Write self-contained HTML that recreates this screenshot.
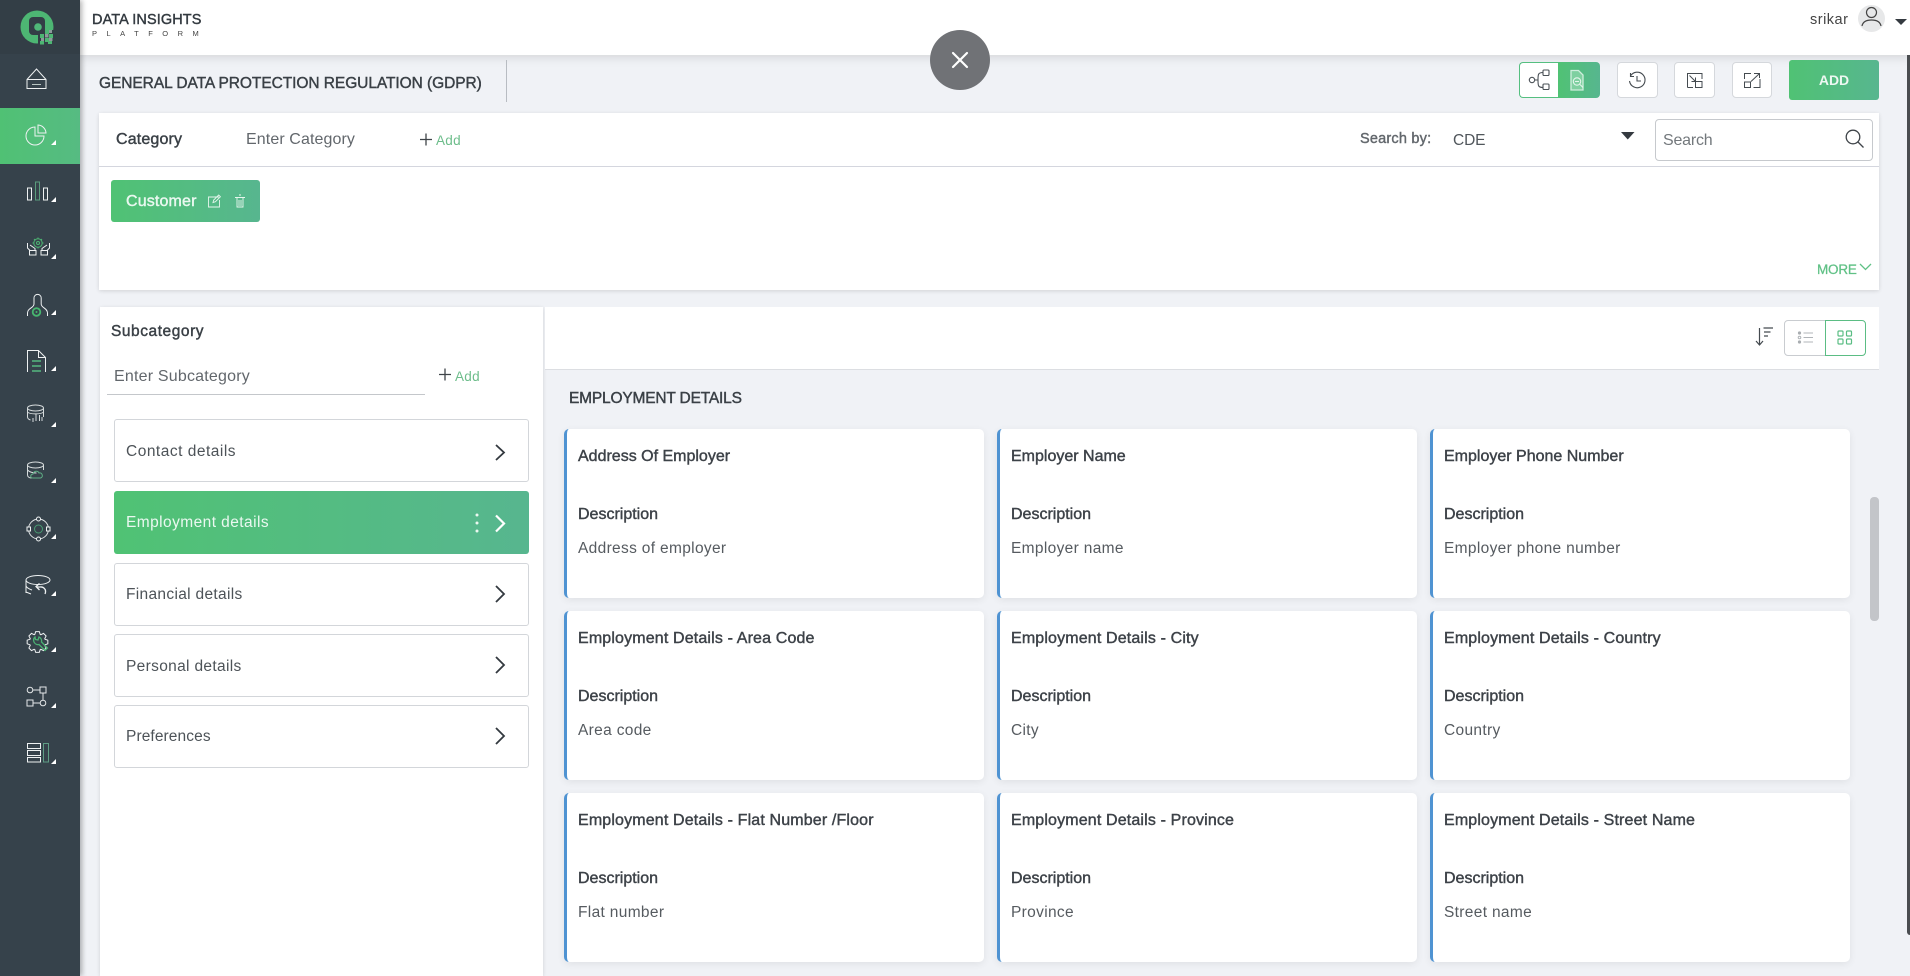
<!DOCTYPE html>
<html lang="en"><head><meta charset="utf-8"><title>Data Insights Platform</title>
<style>
*{box-sizing:border-box}
html,body{margin:0;padding:0;width:1910px;height:976px;overflow:hidden;background:#f0f2f6;font-family:"Liberation Sans",sans-serif;color:#3a4046}
div,span,svg{position:absolute}
.t{white-space:nowrap;line-height:20px;height:20px}
.s{-webkit-text-stroke:.42px currentColor}
.side{left:0;top:0;width:80px;height:976px;background:#36424b;box-shadow:2px 0 5px rgba(0,0,0,.3)}
.top{left:80px;top:0;width:1830px;height:55px;background:#fff;box-shadow:0 2px 10px rgba(0,0,0,.13)}
.panel{background:#fff;box-shadow:0 1px 4px rgba(0,0,0,.13)}
.btn{background:#fff;border:1px solid #d5d8dc;border-radius:4px;width:41px;height:36px;top:62px}
.item{left:114px;width:415px;height:63px;background:#fff;border:1px solid #d3d6da;border-radius:3px}
.card{width:420px;height:169px;background:#fff;border-left:3px solid #4f93d2;border-radius:5px;box-shadow:0 2px 8px rgba(0,0,0,.07)}
.card .a{left:11px;top:18px;font-size:16px;color:#3d4248}
.card .e{letter-spacing:.15px}
.card .b{left:11px;top:76px;font-size:16px;color:#3d4248}
.card .c{left:11px;top:110px;font-size:15.5px;letter-spacing:.33px;color:#565b60}
.grn{background:linear-gradient(90deg,#50c274,#57b68f)}
</style></head><body>

<div class="top"></div>
<div class="side"></div>

<svg style="left:0;top:0" width="80" height="976" viewBox="0 0 80 976" fill="none" stroke="#eef1f2" stroke-width="1">
  <defs><linearGradient id="ga"><stop offset="0" stop-color="#50c174"/><stop offset="1" stop-color="#56bb82"/></linearGradient></defs>
  <rect x="0" y="0" width="80" height="54" fill="#333e46" stroke="none"/>
  <rect x="0" y="108" width="80" height="56" fill="url(#ga)" stroke="none"/>
  <!-- logo -->
  <circle cx="37" cy="27" r="16.500" fill="#4db673" stroke="none"/>
  <rect x="29" y="17" width="16" height="18" rx="4" fill="#333e46" stroke="none"/>
  <rect x="38" y="30" width="17" height="16" fill="#333e46" stroke="none"/>
  <circle cx="38" cy="27" r="3.800" fill="#4fb878" stroke="none"/>
  <g stroke="none" fill="#4db673"><rect x="45" y="30" width="4" height="4"/><rect x="40" y="34" width="4" height="4"/><rect x="49" y="34" width="4" height="4"/><rect x="45" y="38" width="4" height="4"/><rect x="40" y="41" width="4" height="3.500"/><rect x="48" y="41" width="4" height="3"/></g>
  <g stroke="none" fill="#8d9a9b"><rect x="49" y="30" width="3" height="3"/><rect x="45" y="34" width="3.500" height="3.500"/><rect x="41" y="38" width="3" height="3"/><rect x="49" y="38" width="3.500" height="3"/></g>
  <!-- home -->
  <path d="M27 79.500 36.500 69 46 79.500V88.500H27ZM27 79.500H46"/><path d="M32 84.500H41" stroke="#b9c6c2"/>
  <!-- pie -->
  <path d="M35 127A9 9 0 1 0 44 136H35Z"/><path d="M38 125A8.500 8.500 0 0 1 46 133H38Z"/>
  <!-- bars -->
  <rect x="27.500" y="188" width="4" height="12"/><rect x="35.500" y="182" width="4" height="18" stroke="#5a9c7c"/><rect x="43.500" y="188" width="4" height="12"/>
  <!-- hands -->
  <circle cx="38" cy="243" r="4.200" stroke="#4db673"/><circle cx="38" cy="243" r="1.500" stroke="#4db673"/><path d="M38 237.500v1.300M38 247.200v1.300M32.500 243h1.300M42.200 243h1.300M34 239l1 1M42 239l-1 1" stroke="#4db673"/>
  <rect x="29.500" y="250.500" width="6.500" height="4.500"/><rect x="41" y="250.500" width="6.500" height="4.500"/>
  <path d="M27.500 243v5l2.500 2.500M30 245l5 3.500v2M49.500 243v5l-2.500 2.500M47 245l-5 3.500v2"/>
  <!-- person -->
  <path d="M27.500 316v-3c0-5 6.500-5 6.500-9v-6a3.600 3.600 0 0 1 7.200 0v6c0 4 6.300 4 6.300 9v3"/>
  <circle cx="36.500" cy="312" r="3.800" stroke="#47b56f" stroke-width="1.800"/><circle cx="36.500" cy="312" r="1" fill="#47b56f" stroke="none"/>
  <!-- doc -->
  <path d="M45.500 372V357.500L38.500 350.500H27.500V372"/><path d="M38.500 350.500V357.500H45.500"/><path d="M32 361H41M32 366H41M32 371H41" stroke="#55b87f" stroke-width="1.400"/>
  <!-- db -->
  <g stroke="#d6dbdc"><ellipse cx="35.500" cy="408" rx="8" ry="3"/><path d="M27.500 408v9c0 1.500 1.500 2.500 3 3M43.500 408v9M27.500 412c2 2.500 14 2.500 16 0"/><path d="M36 414v7M39.500 415v6M33 418v4M42 417v4"/></g>
  <!-- db cloud -->
  <g stroke="#d6dbdc"><ellipse cx="35.500" cy="465" rx="8" ry="3"/><path d="M27.500 465v10c0 2 2 3 4 3M43.500 465v5M27.500 470c2 2 6 3 9 3"/></g>
  <path d="M33 478c-3 0-3-3.500 0-4 1-3.500 5-3.500 6-1 3-1 5 4 1.500 5Z" stroke="#5fae85"/>
  <!-- circle -->
  <circle cx="38.500" cy="529" r="10" stroke="#dfe3e4"/><circle cx="38.500" cy="529" r="4" stroke="#4a9c73"/>
  <g fill="#36424b"><circle cx="38.500" cy="519" r="2"/><circle cx="38.500" cy="539" r="2"/><rect x="27" y="527" width="3.500" height="4"/><rect x="46.500" y="527" width="3.500" height="4"/></g>
  <!-- db arrow -->
  <ellipse cx="38" cy="580" rx="12" ry="4.500"/><path d="M26 580v13M26 586c1 2 3 3 6 4M26 592l5 2"/>
  <path d="M45 594c2-5-2-7.500-5-7H36M39.500 583.500l-3.500 3 3.500 3.500" stroke-width="1.300"/>
  <!-- gear -->
  <path transform="translate(37.500 642)" d="M7.520-2.740L10.340-1.820V1.820L7.520 2.740 7.250 3.380 8.600 6.020 6.020 8.600 3.380 7.250 2.740 7.520 1.820 10.340H-1.820L-2.740 7.520-3.380 7.250-6.020 8.600-8.600 6.020-7.250 3.380-7.520 2.740-10.340 1.820V-1.820L-7.520-2.740-7.250-3.380-8.600-6.020-6.020-8.600-3.380-7.250-2.740-7.520-1.820-10.340H1.820L2.740-7.520 3.380-7.250 6.020-8.600 8.600-6.020 7.250-3.380Z"/>
  <path d="M35 637a4.500 4.500 0 0 0-1 5c1 2 3 3 5 2.500l6 6 2.500-2.500-6-6c.5-2-.5-4-2.500-5l-1 3-2.500-.5Z" stroke="#4bb073" stroke-width="1.300"/>
  <!-- flow -->
  <g stroke="#e4e7e8"><circle cx="30" cy="690" r="2.800"/><rect x="40" y="687" width="6" height="6"/><path d="M33 690h7M43 693v7"/><circle cx="43" cy="703" r="2.800"/><rect x="27" y="700" width="6" height="6"/><path d="M33 703h7"/></g>
  <!-- list -->
  <rect x="27.500" y="743.500" width="13" height="5"/><rect x="27.500" y="750.500" width="13" height="5"/><rect x="27.500" y="757.500" width="13" height="4.500"/><rect x="43.500" y="743.500" width="5" height="18.500" stroke="#5f9c84"/>
  <!-- corner markers -->
  <g fill="#fff" stroke="none">
    <path d="M56 140v5h-5ZM56 197v5h-5ZM56 254v5h-5ZM56 310v5h-5ZM56 366v5h-5ZM56 422v5h-5ZM56 478v5h-5ZM56 534v5h-5ZM56 591v5h-5ZM56 647v5h-5ZM56 703v5h-5ZM56 759v5h-5Z"/>
  </g>
</svg>

<!-- header -->
<span class="t s" style="left:92px;top:10px;font-size:14.500px;letter-spacing:.1px;color:#333a40">DATA INSIGHTS</span>
<span class="t" style="left:92px;top:24px;font-size:7.500px;letter-spacing:9.500px;color:#444">PLATFORM</span>
<span class="t" style="left:1810px;top:10px;font-size:14.500px;letter-spacing:.5px;color:#444">srikar</span>
<div style="left:1858px;top:5px;width:27px;height:27px;border-radius:50%;background:#e7e8e9"></div>
<svg style="left:1858px;top:5px" width="27" height="27" fill="none" stroke="#444" stroke-width="1.200"><circle cx="13.500" cy="7.500" r="5"/><path d="M4 21c1-5 5-6 9.500-6s8.500 1 9.500 6"/></svg>
<svg style="left:1895px;top:19px" width="13" height="7"><path d="M0 0H12L6 6Z" fill="#343a40"/></svg>

<!-- page title bar -->
<span class="t s" style="left:99px;top:74px;font-size:15.500px;letter-spacing:-.06px;color:#3a4046">GENERAL DATA PROTECTION REGULATION (GDPR)</span>
<div style="left:506px;top:60px;width:1px;height:42px;background:#b8bcc2"></div>

<div style="left:1519px;top:62px;width:40px;height:36px;background:#fff;border:1px solid #55bf80;border-right:0;border-radius:4px 0 0 4px"></div>
<div class="grn" style="left:1558px;top:62px;width:42px;height:36px;border-radius:0 4px 4px 0"></div>
<svg style="left:1519px;top:62px" width="81" height="36" fill="none" stroke="#4a5056" stroke-width="1.100">
  <circle cx="13" cy="18" r="2.700"/><rect x="24" y="8" width="6" height="5.500" rx="1"/><rect x="24" y="22" width="6" height="5.500" rx="1"/><path d="M15.700 18H19M24 10.500c-5 0-5 2-5 7.500s0 7.500 5 7.500"/>
  <path d="M52 8.500h7.500l4.500 4.500V28H52Z" fill="#7fd0a0" stroke="#cfeedd" stroke-width="1.300"/><circle cx="58" cy="19.500" r="3.700" stroke="#e4f6ec"/><path d="M56 19.500h4M61 22.500l3 3" stroke="#e4f6ec"/>
</svg>
<div class="btn" style="left:1617px"></div><div class="btn" style="left:1674px"></div><div class="btn" style="left:1732px;width:40px"></div>
<svg style="left:1617px;top:62px" width="41" height="36" fill="none" stroke="#454b50" stroke-width="1.100"><path d="M13.500 14a7.800 7.800 0 1 1-1 5M13.500 11v3.500H17M20 14v5h4"/></svg>
<svg style="left:1674px;top:62px" width="41" height="36" fill="none" stroke="#454b50" stroke-width="1"><path d="M13.500 25.500V11.500H28V17M13.500 25.500H19M15.500 13.500l6 6M21.500 15.500v4h-4"/><rect x="21.500" y="19.500" width="6.500" height="6"/></svg>
<svg style="left:1732px;top:62px" width="40" height="36" fill="none" stroke="#454b50" stroke-width="1"><path d="M12.500 17V11.500H19M28 17V25.500H21.500M19 19.500l8-7.500M22 11.500h5.500V16"/><rect x="12.500" y="20" width="6" height="5.500"/></svg>
<div class="grn" style="left:1789px;top:60px;width:90px;height:40px;border-radius:3px"></div>
<span class="t" style="left:1789px;top:70px;width:90px;text-align:center;font-size:14px;font-weight:700;color:#eef8f2">ADD</span>

<!-- category panel -->
<div class="panel" style="left:99px;top:113px;width:1780px;height:177px"></div>
<div style="left:99px;top:166px;width:1780px;height:1px;background:#d4d6de"></div>
<span class="t s" style="left:116px;top:130px;font-size:16px;letter-spacing:.15px;color:#3a4046">Category</span>
<span class="t" style="left:246px;top:130px;font-size:16px;letter-spacing:.1px;color:#62676c">Enter Category</span>
<svg style="left:419px;top:133px" width="14" height="14" stroke="#3f4449" stroke-width="1.300"><path d="M1 6.500H13M7 .5V12.500"/></svg>
<span class="t" style="left:436px;top:131px;font-size:13.500px;letter-spacing:.3px;color:#6dbd8b">Add</span>
<div class="grn" style="left:111px;top:180px;width:149px;height:42px;border-radius:3px"></div>
<span class="t s" style="left:126px;top:192px;font-size:16px;letter-spacing:.15px;color:#eaf8f0">Customer</span>
<svg style="left:206px;top:192px" width="42" height="18" fill="none" stroke="#e6f6ed" stroke-width=".9">
  <path d="M13 5H2.500V15H13.500V8M7 10.500l.7-2.500 5-5 1.700 1.700-5 5Z"/>
  <path d="M29 5.500H39M31 5.500V15H37V5.500M33 3h2M33 8v6M35 8v6"/>
</svg>
<span class="t s" style="left:1360px;top:129px;font-size:14.500px;letter-spacing:.2px;color:#63686d">Search by:</span>
<span class="t" style="left:1453px;top:131px;font-size:15.500px;letter-spacing:-.1px;color:#50565b">CDE</span>
<svg style="left:1621px;top:132px" width="14" height="8"><path d="M0 0H13.500L6.750 7.500Z" fill="#343a40"/></svg>
<div style="left:1655px;top:119px;width:218px;height:42px;border:1px solid #c6c9cd;border-radius:4px;background:#fff"></div>
<span class="t" style="left:1663px;top:131px;font-size:16px;letter-spacing:-.2px;color:#73787c">Search</span>
<svg style="left:1844px;top:128px" width="22" height="22" fill="none" stroke="#3f4449" stroke-width="1.300"><circle cx="9" cy="9" r="6.800"/><path d="M14 14l5.500 5.500"/></svg>
<span class="t s" style="left:1817px;top:260px;font-size:13.500px;letter-spacing:-.2px;-webkit-text-stroke-width:.25px;color:#60c186">MORE</span>
<svg style="left:1859px;top:263px" width="13" height="8" fill="none" stroke="#60c186" stroke-width="1.300"><path d="M1 1l5.500 5.500L12 1"/></svg>

<!-- left subcategory -->
<div class="panel" style="left:100px;top:307px;width:443px;height:669px"></div>
<span class="t s" style="left:111px;top:322px;font-size:15.500px;letter-spacing:.55px;color:#3a4046">Subcategory</span>
<span class="t" style="left:114px;top:367px;font-size:16px;letter-spacing:.2px;color:#62676c">Enter Subcategory</span>
<div style="left:107px;top:394px;width:318px;height:1px;background:#c4c7cb"></div>
<svg style="left:438px;top:368px" width="14" height="14" stroke="#3f4449" stroke-width="1.300"><path d="M1 6.500H13M7 .5V12.500"/></svg>
<span class="t" style="left:455px;top:367px;font-size:13.500px;letter-spacing:.3px;color:#6dbd8b">Add</span>

<div class="item" style="top:419px"></div>
<span class="t" style="left:126px;top:442px;font-size:15.500px;letter-spacing:.5px;color:#4d5358">Contact details</span>
<div class="item grn" style="top:491px;border:0"></div>
<span class="t" style="left:126px;top:513px;font-size:15.500px;letter-spacing:.43px;color:#eaf8f0">Employment details</span>
<div class="item" style="top:563px"></div>
<span class="t" style="left:126px;top:585px;font-size:15.500px;letter-spacing:.32px;color:#4d5358">Financial details</span>
<div class="item" style="top:634px"></div>
<span class="t" style="left:126px;top:657px;font-size:15.500px;letter-spacing:.33px;color:#4d5358">Personal details</span>
<div class="item" style="top:705px"></div>
<span class="t" style="left:126px;top:727px;font-size:15.500px;letter-spacing:.1px;color:#4d5358">Preferences</span>
<svg style="left:470px;top:410px" width="40" height="350" fill="none" stroke="#33393f" stroke-width="1.800">
  <path d="M26 35l8 7.500-8 7.500M26 176l8 8-8 8M26 247l8 8-8 8M26 318l8 8-8 8"/>
  <path d="M26 105.500l8 8-8 8" stroke="#fff" stroke-width="2.200"/>
  <g fill="#eaf8f0" stroke="none"><circle cx="7" cy="105" r="1.500"/><circle cx="7" cy="113" r="1.500"/><circle cx="7" cy="121" r="1.500"/></g>
</svg>

<!-- right header -->
<div style="left:545px;top:307px;width:1334px;height:63px;background:#fff;border-bottom:1px solid #dcdee2"></div>
<svg style="left:1755px;top:324px" width="22" height="24" fill="none" stroke="#444a4f" stroke-width="1.200"><path d="M4.500 4V21M1 17l3.500 4L8 17"/><path d="M8.500 4H18M9 8H15.500M9 12H13" stroke-width="1.300"/></svg>
<div style="left:1784px;top:320px;width:42px;height:36px;border:1px solid #c9ccd0;border-radius:4px 0 0 4px;background:#fff"></div>
<div style="left:1825px;top:320px;width:41px;height:36px;border:1px solid #5bbd84;border-radius:0 4px 4px 0;background:#fff"></div>
<svg style="left:1784px;top:320px" width="82" height="36" fill="none" stroke="#b0b4b8" stroke-width="1">
  <path d="M19.500 13H29M19.500 17.500H29M19.500 22H29"/><circle cx="15.500" cy="13" r="1.600" fill="#a9adb1" stroke="none"/><circle cx="15.500" cy="17.500" r="1.300"/><circle cx="15.500" cy="22" r="1.600" fill="#a9adb1" stroke="none"/>
  <g stroke="#5bbd84" stroke-width="1.200"><rect x="54" y="11" width="5" height="5" rx="1"/><rect x="62.500" y="11" width="5" height="5" rx="1"/><rect x="54" y="19" width="5" height="5" rx="1"/><rect x="62.500" y="19" width="5" height="5" rx="1"/></g>
</svg>

<span class="t s" style="left:569px;top:389px;font-size:15.500px;letter-spacing:-.18px;color:#3a4046">EMPLOYMENT DETAILS</span>

<!-- cards -->
<div class="card" style="left:564px;top:429px"><span class="t s a">Address Of Employer</span><span class="t s b">Description</span><span class="t c">Address of employer</span></div>
<div class="card" style="left:997px;top:429px"><span class="t s a">Employer Name</span><span class="t s b">Description</span><span class="t c">Employer name</span></div>
<div class="card" style="left:1430px;top:429px"><span class="t s a">Employer Phone Number</span><span class="t s b">Description</span><span class="t c">Employer phone number</span></div>
<div class="card" style="left:564px;top:611px"><span class="t s a e">Employment Details - Area Code</span><span class="t s b">Description</span><span class="t c">Area code</span></div>
<div class="card" style="left:997px;top:611px"><span class="t s a e">Employment Details - City</span><span class="t s b">Description</span><span class="t c">City</span></div>
<div class="card" style="left:1430px;top:611px"><span class="t s a e">Employment Details - Country</span><span class="t s b">Description</span><span class="t c">Country</span></div>
<div class="card" style="left:564px;top:793px"><span class="t s a e">Employment Details - Flat Number /Floor</span><span class="t s b">Description</span><span class="t c">Flat number</span></div>
<div class="card" style="left:997px;top:793px"><span class="t s a e">Employment Details - Province</span><span class="t s b">Description</span><span class="t c">Province</span></div>
<div class="card" style="left:1430px;top:793px"><span class="t s a e">Employment Details - Street Name</span><span class="t s b">Description</span><span class="t c">Street name</span></div>

<!-- scrollbars -->
<div style="left:1870px;top:497px;width:9px;height:124px;background:#c3c5c9;border-radius:4px"></div>
<div style="left:1907px;top:55px;width:3px;height:880px;background:#4a4d50;border-radius:0 0 0 3px"></div>

<!-- close -->
<div style="left:930px;top:30px;width:60px;height:60px;border-radius:50%;background:#707276"></div>
<svg style="left:950px;top:50px" width="20" height="20" stroke="#fff" stroke-width="2.200" stroke-linecap="round"><path d="M3 3L17 17M17 3L3 17"/></svg>
</body></html>
